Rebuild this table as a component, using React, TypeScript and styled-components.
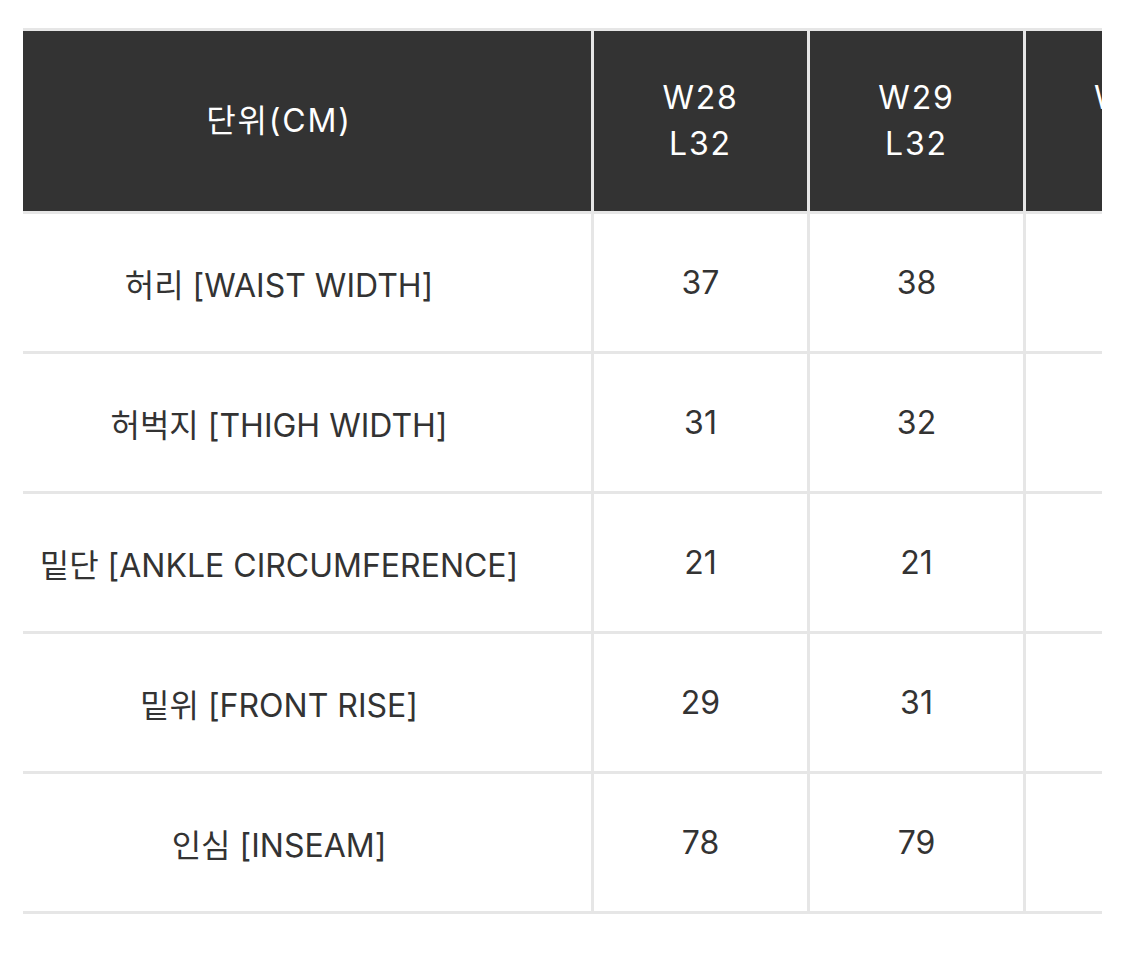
import styled, { createGlobalStyle } from "styled-components";

const GlobalStyle = createGlobalStyle`
  html, body {
    margin: 0;
    padding: 0;
    background: #fff;
  }
  body {
    font-family: Inter, "Noto Sans", "Noto Sans CJK KR", sans-serif;
    color: #333;
  }
`;

const Page = styled.div`
  padding: 28px 0 0 23px;
`;

// 표가 가로 스크롤된 상태라 양쪽이 잘려 보임
const ScrollBox = styled.div`
  width: 1079px;
  overflow: hidden;
`;

const SizeTable = styled.table<{ $cols: number }>`
  width: ${(p) => 627 + p.$cols * 216}px;
  margin-left: -56px;
  border-collapse: separate;
  border-spacing: 0;
  table-layout: fixed;
  border-top: 3px solid #e6e6e6;
  font-family: Inter, "Noto Sans CJK KR", sans-serif;
`;

const HeadCell = styled.th<{ $wide?: boolean }>`
  box-sizing: border-box;
  width: ${(p) => (p.$wide ? "627px" : "216px")};
  height: 183px;
  padding: 0;
  background: #333;
  color: #fff;
  font-size: 32px;
  font-weight: 400;
  letter-spacing: 1.8px;
  line-height: 46px;
  text-align: center;
  vertical-align: middle;
  white-space: nowrap;
  border-right: 3px solid #e6e6e6;
  border-bottom: 3px solid #e6e6e6;
`;

const Cell = styled.td`
  box-sizing: border-box;
  height: 140px;
  padding: 0;
  font-size: 32px;
  color: #333;
  text-align: center;
  vertical-align: middle;
  white-space: nowrap;
  border-right: 3px solid #e6e6e6;
  border-bottom: 3px solid #e6e6e6;
`;

interface ISize {
	label: string;
	values: number[];
}

const sizes = ["W28", "W29", "W30"];

const rows: ISize[] = [
	{ label: "허리 [WAIST WIDTH]", values: [37, 38, 39] },
	{ label: "허벅지 [THIGH WIDTH]", values: [31, 32, 33] },
	{ label: "밑단 [ANKLE CIRCUMFERENCE]", values: [21, 21, 22] },
	{ label: "밑위 [FRONT RISE]", values: [29, 31, 31] },
	{ label: "인심 [INSEAM]", values: [78, 79, 79] },
];

function App() {
	return (
		<Page>
			<GlobalStyle />
			<ScrollBox>
				<SizeTable $cols={sizes.length}>
					<thead>
						<tr>
							<HeadCell $wide>단위(CM)</HeadCell>
							{sizes.map((s) => (
								<HeadCell key={s}>
									{s}
									<br />
									L32
								</HeadCell>
							))}
						</tr>
					</thead>
					<tbody>
						{rows.map((row) => (
							<tr key={row.label}>
								<Cell>{row.label}</Cell>
								{row.values.map((v, i) => (
									<Cell key={i}>{v}</Cell>
								))}
							</tr>
						))}
					</tbody>
				</SizeTable>
			</ScrollBox>
		</Page>
	);
}

export default App;
